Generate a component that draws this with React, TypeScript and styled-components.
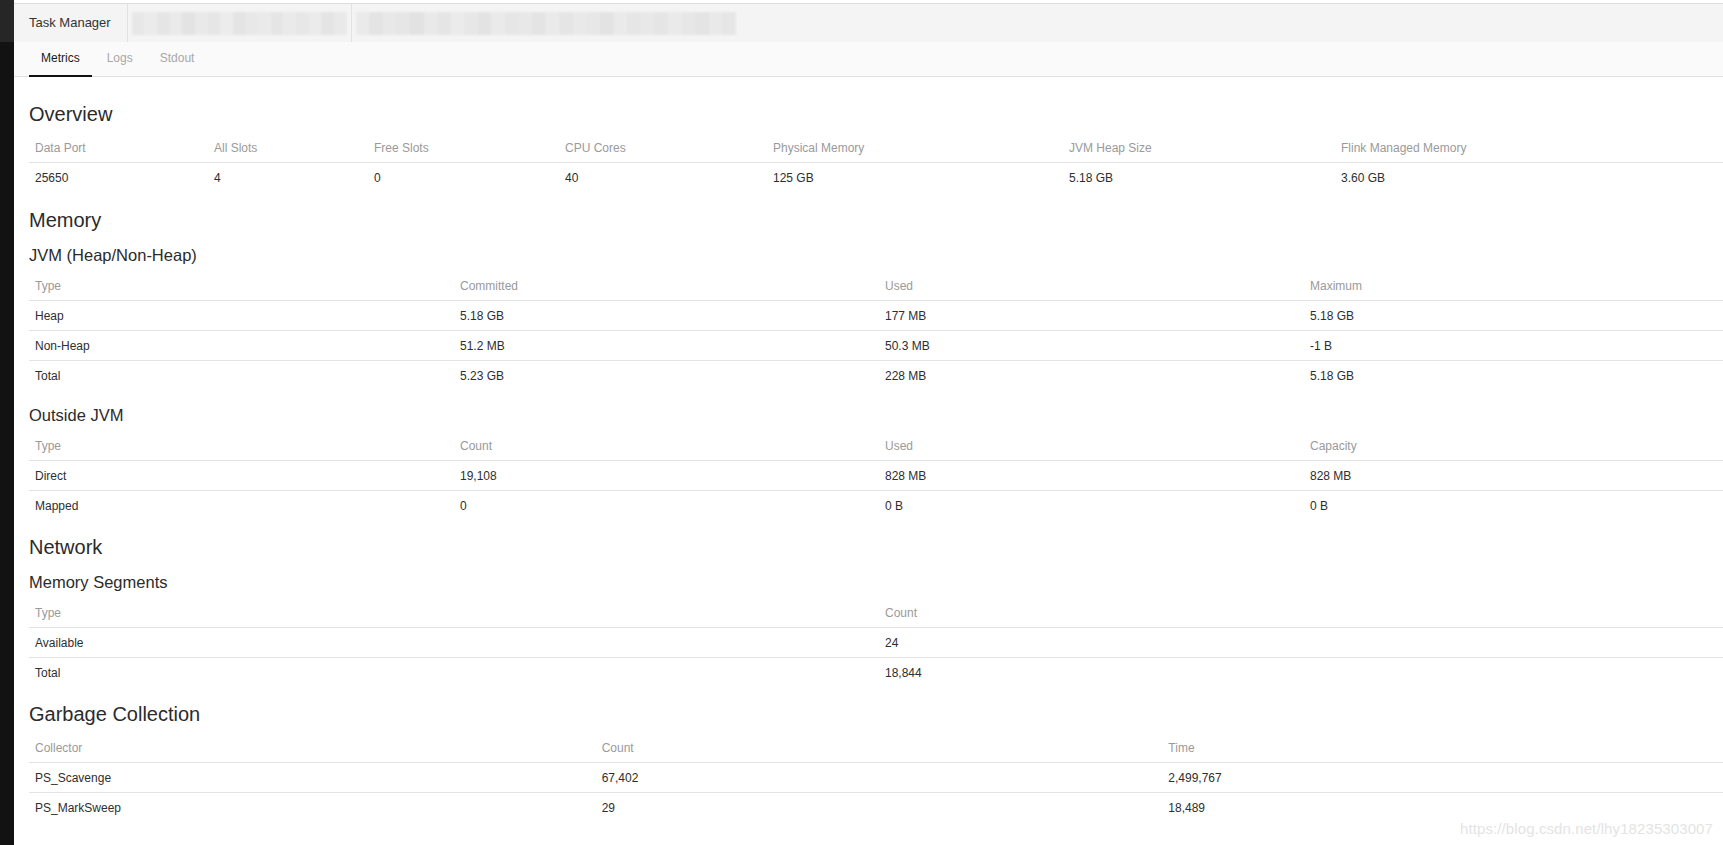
import React, { FC } from 'react'
import styled, { createGlobalStyle } from 'styled-components'

const GlobalStyle = createGlobalStyle`
  html, body {
    margin: 0;
    padding: 0;
    background: #fff;
    overflow: hidden;
  }
  body {
    font-family: "Liberation Sans", Arial, sans-serif;
    color: #333;
  }
`

const Layout = styled.div`
  display: flex;
  height: 100vh;
  overflow: hidden;
  position: relative;
`

const Sidebar = styled.div`
  width: 14px;
  flex: none;
  display: flex;
  flex-direction: column;
  background: #121212;
`

const SidebarTop = styled.div`
  height: 42px;
  background: #262626;
`

// the page is a little wider than the window, the right edge is cut off
const Main = styled.div`
  flex: 1;
  min-width: 0;
  margin-right: -6px;
  display: flex;
  flex-direction: column;
`

const Header = styled.div`
  margin-top: 3px;
  height: 39px;
  box-sizing: border-box;
  border-top: 1px solid #dedede;
  background: #f4f4f4;
  display: flex;
`

const HeaderCell = styled.div`
  padding: 0 16px 0 15px;
  line-height: 38px;
  font-size: 13px;
  color: #333;
  border-right: 1px solid #e2e2e2;
`

const BlurCell = styled.div<{ $width: number; $border?: boolean }>`
  width: ${({ $width }) => $width}px;
  box-sizing: border-box;
  display: flex;
  align-items: center;
  padding: 0 4px;
  border-right: ${({ $border }) => ($border ? '1px solid #e2e2e2' : 'none')};
`

const Mosaic = styled.div`
  display: flex;
  height: 23px;
  flex: 1;
  filter: blur(1.2px);
  opacity: 0.9;
`

const Tile = styled.div<{ $shade: string }>`
  flex: 1;
  background: ${({ $shade }) => $shade};
`

const TabBar = styled.div`
  height: 35px;
  box-sizing: border-box;
  background: #fafafa;
  border-bottom: 1px solid #e0e0e0;
  display: flex;
  gap: 3px;
  padding-left: 15px;
`

const Tab = styled.div<{ $active?: boolean }>`
  height: 35px;
  box-sizing: border-box;
  padding: 0 12px;
  line-height: 33px;
  font-size: 12px;
  color: ${({ $active }) => ($active ? '#1a1a1a' : '#a8a8a8')};
  border-bottom: 2px solid ${({ $active }) => ($active ? '#111' : 'transparent')};
`

const Content = styled.div`
  padding: 11px 0 0 15px;
`

const SectionTitle = styled.h2`
  font-size: 20px;
  line-height: 28px;
  font-weight: normal;
  color: #2b2b2b;
  margin: 12px 0 5px;
`

const SubTitle = styled.h3`
  font-size: 16.5px;
  line-height: 24px;
  font-weight: normal;
  color: #2b2b2b;
  margin: 12px 0 4px;

  ${SectionTitle} + & {
    margin-top: 9px;
  }
`

const Table = styled.div<{ $loose?: boolean }>`
  width: 100%;
  font-size: 12px;
  padding-bottom: ${({ $loose }) => ($loose ? '1px' : '0')};
`

const Row = styled.div<{ $cols: string; $head?: boolean }>`
  display: grid;
  grid-template-columns: ${({ $cols }) => $cols};
  height: 30px;
  box-sizing: border-box;
  align-items: center;
  border-bottom: 1px solid #e3e3e3;
  color: ${({ $head }) => ($head ? '#9a9a9a' : '#2e2e2e')};

  &:last-child {
    border-bottom-color: transparent;
  }
`

const Cell = styled.div`
  padding-left: 6px;
  white-space: nowrap;
`

const Watermark = styled.div`
  position: absolute;
  right: 10px;
  bottom: 8px;
  font-size: 15px;
  color: #e4e4e4;
  letter-spacing: 0.1px;
`

type TableProps = {
  cols: string
  head: string[]
  rows: string[][]
  loose?: boolean
}

const DataTable: FC<TableProps> = ({ cols, head, rows, loose }) => (
  <Table $loose={loose}>
    <Row $cols={cols} $head>
      {head.map((h) => (
        <Cell key={h}>{h}</Cell>
      ))}
    </Row>
    {rows.map((r, i) => (
      <Row $cols={cols} key={i}>
        {r.map((c, j) => (
          <Cell key={j}>{c}</Cell>
        ))}
      </Row>
    ))}
  </Table>
)

const shadesA = ['#e6e6e6', '#ebebeb', '#e4e4e4', '#e9e9e9', '#e2e2e2', '#e8e8e8', '#e5e5e5', '#ececec', '#e3e3e3', '#e7e7e7', '#eaeaea', '#e4e4e4', '#e9e9e9', '#e6e6e6', '#ebebeb', '#e3e3e3', '#e8e8e8']
const shadesB = ['#e9e9e9', '#e3e3e3', '#e7e7e7', '#e5e5e5', '#e1e1e1', '#e8e8e8', '#e4e4e4', '#ebebeb', '#e6e6e6', '#e2e2e2', '#e9e9e9', '#e5e5e5', '#e7e7e7', '#e3e3e3', '#eaeaea', '#e4e4e4', '#e8e8e8', '#e6e6e6', '#e2e2e2', '#e9e9e9', '#e5e5e5', '#e7e7e7', '#e4e4e4', '#eaeaea', '#e6e6e6', '#e3e3e3', '#e8e8e8', '#e5e5e5']

const App: FC = () => (
  <Layout>
    <GlobalStyle />
    <Sidebar>
      <SidebarTop />
    </Sidebar>
    <Main>
      <Header>
        <HeaderCell>Task Manager</HeaderCell>
        <BlurCell $width={224} $border>
          <Mosaic>
            {shadesA.map((s, i) => (
              <Tile key={i} $shade={s} />
            ))}
          </Mosaic>
        </BlurCell>
        <BlurCell $width={388}>
          <Mosaic>
            {shadesB.map((s, i) => (
              <Tile key={i} $shade={s} />
            ))}
          </Mosaic>
        </BlurCell>
      </Header>
      <TabBar>
        <Tab $active>Metrics</Tab>
        <Tab>Logs</Tab>
        <Tab>Stdout</Tab>
      </TabBar>
      <Content>
        <SectionTitle>Overview</SectionTitle>
        <DataTable
          loose
          cols="179px 160px 191px 208px 296px 272px 1fr"
          head={['Data Port', 'All Slots', 'Free Slots', 'CPU Cores', 'Physical Memory', 'JVM Heap Size', 'Flink Managed Memory']}
          rows={[['25650', '4', '0', '40', '125 GB', '5.18 GB', '3.60 GB']]}
        />

        <SectionTitle>Memory</SectionTitle>
        <SubTitle>JVM (Heap/Non-Heap)</SubTitle>
        <DataTable
          cols="repeat(4, 1fr)"
          head={['Type', 'Committed', 'Used', 'Maximum']}
          rows={[
            ['Heap', '5.18 GB', '177 MB', '5.18 GB'],
            ['Non-Heap', '51.2 MB', '50.3 MB', '-1 B'],
            ['Total', '5.23 GB', '228 MB', '5.18 GB'],
          ]}
        />
        <SubTitle>Outside JVM</SubTitle>
        <DataTable
          cols="repeat(4, 1fr)"
          head={['Type', 'Count', 'Used', 'Capacity']}
          rows={[
            ['Direct', '19,108', '828 MB', '828 MB'],
            ['Mapped', '0', '0 B', '0 B'],
          ]}
        />

        <SectionTitle>Network</SectionTitle>
        <SubTitle>Memory Segments</SubTitle>
        <DataTable
          cols="repeat(2, 1fr)"
          head={['Type', 'Count']}
          rows={[
            ['Available', '24'],
            ['Total', '18,844'],
          ]}
        />

        <SectionTitle>Garbage Collection</SectionTitle>
        <DataTable
          cols="repeat(3, 1fr)"
          head={['Collector', 'Count', 'Time']}
          rows={[
            ['PS_Scavenge', '67,402', '2,499,767'],
            ['PS_MarkSweep', '29', '18,489'],
          ]}
        />
      </Content>
    </Main>
    <Watermark>https://blog.csdn.net/lhy18235303007</Watermark>
  </Layout>
)

export default App
